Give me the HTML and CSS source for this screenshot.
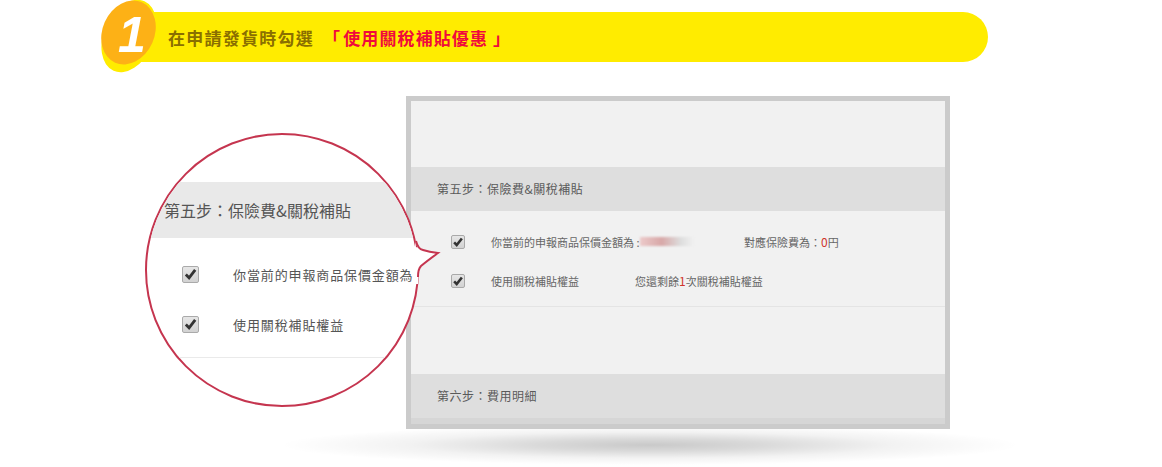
FILE: index.html
```
<!DOCTYPE html>
<html lang="zh-Hant">
<head>
<meta charset="utf-8">
<title>關稅補貼</title>
<link rel="stylesheet" href="styles.css">
</head>
<body>
<div class="canvas">
  <div class="banner">
    <span class="title-dark">在申請發貨時勾選</span>
    <span class="title-red">「&#8202;使用關稅補貼優惠 」</span>
  </div>
  <div class="badge">
    <svg width="70" height="76" viewBox="0 0 70 76">
      <ellipse cx="31" cy="36" rx="25" ry="38" fill="#ffec00" transform="rotate(24 31 36)"/>
      <ellipse cx="30.5" cy="32.5" rx="26" ry="33" fill="#fdb116" transform="rotate(24 30.5 32.5)"/>
    </svg>
    <span class="badge-num">1</span>
  </div>

  <div class="shadow"></div>

  <div class="panel">
    <div class="panel-gap-top"></div>
    <div class="band">第五步：保險費&amp;關稅補貼</div>
    <div class="rows">
      <div class="row">
        <span class="check"><svg viewBox="0 0 14 14" width="14" height="14"><path class="tick" d="M2.5 7.5 L5.5 10.5 L11.5 3"/></svg></span>
        <span class="col-a">你當前的申報商品保價金額為 :<span class="blur"></span></span>
        <span class="col-b">對應保險費為：<em>0</em>円</span>
      </div>
      <div class="row">
        <span class="check"><svg viewBox="0 0 14 14" width="14" height="14"><path class="tick" d="M2.5 7.5 L5.5 10.5 L11.5 3"/></svg></span>
        <span class="col-c">使用關稅補貼權益</span>
        <span class="col-d">您還剩餘<em>1</em>次關稅補貼權益</span>
      </div>
    </div>
    <div class="panel-gap-mid"></div>
    <div class="band">第六步：費用明細</div>
    <div class="panel-foot"></div>
  </div>

  <div class="lens">
    <div class="lens-band">第五步：保險費&amp;關稅補貼</div>
    <div class="lens-row lens-row-first">
      <span class="lens-check"><svg viewBox="0 0 16 16" width="16" height="16"><path class="tick" d="M3 8.5 L6.5 12 L13 3.5"/></svg></span>
      <span class="lens-text">你當前的申報商品保價金額為</span>
    </div>
    <div class="lens-row">
      <span class="lens-check"><svg viewBox="0 0 16 16" width="16" height="16"><path class="tick" d="M3 8.5 L6.5 12 L13 3.5"/></svg></span>
      <span class="lens-text">使用關稅補貼權益</span>
    </div>
    <div class="lens-rule"></div>
  </div>
  <svg class="tail" width="32" height="44" viewBox="0 0 32 44">
    <path class="tail-fill" d="M0 0 L1 7 Q12 12 23 13 L6 27 Q3 33 3 44 L0 44 Z"/>
    <path class="tail-line" d="M1 1 Q3 9 8 10 Q14 12 23 13 Q12 21 6 26 Q3 29 3 37"/>
  </svg>
</div>
</body>
</html>
```
FILE: styles.css
```
html, body {
  margin: 0;
  padding: 0;
  background: #fff;
}
.canvas {
  position: relative;
  width: 1162px;
  height: 467px;
  overflow: hidden;
  font-family: "Noto Sans CJK TC", "Noto Sans", sans-serif;
}
.banner {
  position: absolute;
  left: 130px;
  top: 12px;
  width: 858px;
  height: 50px;
  box-sizing: border-box;
  padding: 1px 0 0 38px;
  display: flex;
  align-items: center;
  gap: 9px;
  background: #ffec00;
  border-radius: 0 25px 25px 0;
  font-size: 17px;
  font-weight: 700;
  line-height: 48px;
  white-space: nowrap;
}
.title-dark { color: #8a6f00; letter-spacing: 1.25px; }
.title-red { color: #f00a3c; letter-spacing: 1.1px; }
.badge {
  position: absolute;
  left: 98px;
  top: 0;
  width: 70px;
  height: 76px;
}
.badge svg { display: block; }
.badge-num {
  position: absolute;
  left: 19px;
  top: 10px;
  width: 30px;
  text-align: center;
  font-family: "Liberation Sans", sans-serif;
  font-size: 50px;
  line-height: 50px;
  font-weight: 700;
  font-style: italic;
  color: #fff;
}
.shadow {
  position: absolute;
  left: 280px;
  top: 425px;
  width: 740px;
  height: 40px;
  background: radial-gradient(ellipse closest-side, rgba(0,0,0,.21) 0%, rgba(0,0,0,.15) 30%, rgba(0,0,0,.05) 65%, rgba(0,0,0,0) 100%);
}
.panel {
  position: absolute;
  left: 406px;
  top: 96px;
  width: 544px;
  height: 333px;
  box-sizing: border-box;
  border: 5px solid #cbcbcb;
  background: #f1f1f1;
  display: flex;
  flex-direction: column;
  color: #666;
  font-size: 11px;
}
.panel-gap-top { height: 66px; }
.band {
  height: 44px;
  flex: none;
  box-sizing: border-box;
  padding-left: 26px;
  background: #dedede;
  font-size: 12px;
  line-height: 44px;
  color: #5a5a5a;
  letter-spacing: 0.5px;
}
.rows {
  height: 96px;
  box-sizing: border-box;
  padding-top: 11px;
  border-bottom: 1px solid #e4e4e4;
}
.row {
  display: flex;
  align-items: center;
  height: 39px;
  white-space: nowrap;
  letter-spacing: 0;
}
.check {
  flex: none;
  width: 12px;
  height: 12px;
  margin-left: 40px;
  border: 1px solid #a9a9a9;
  border-radius: 2px;
  background: linear-gradient(#e6e6e6, #d2d2d2);
  display: flex;
  align-items: center;
  justify-content: center;
}
.tick {
  fill: none;
  stroke: #333;
  stroke-width: 3;
}
.col-a { margin-left: 26px; width: 253px; display: flex; align-items: center; }
.col-c { margin-left: 26px; width: 144px; }
.col-b em, .col-d em {
  font-style: normal;
  color: #d0342c;
  font-size: 12px;
}
.blur {
  display: inline-block;
  width: 54px;
  height: 9px;
  background: linear-gradient(90deg, #eccaca, #d8a8a8 40%, #ddd 75%, #f1f1f1);
  filter: blur(1px);
}
.panel-gap-mid { height: 67px; }
.panel-foot { flex: 1; background: #d6d6d6; }
.lens {
  position: absolute;
  left: 145px;
  top: 133px;
  width: 274px;
  height: 274px;
  box-sizing: border-box;
  border: 2px solid #c5354f;
  border-radius: 50%;
  background: #fff;
  overflow: hidden;
  color: #555;
}
.lens-band {
  margin-top: 47px;
  height: 56px;
  box-sizing: border-box;
  padding-left: 17px;
  background: #e9e9e9;
  font-size: 16px;
  line-height: 56px;
  color: #555;
  white-space: nowrap;
}
.lens-row {
  display: flex;
  align-items: center;
  height: 50px;
  white-space: nowrap;
  font-size: 13px;
  letter-spacing: 0.88px;
}
.lens-row-first { margin-top: 11px; }
.lens-check {
  flex: none;
  width: 15px;
  height: 15px;
  margin-left: 35px;
  border: 1px solid #aaa;
  border-radius: 2px;
  background: linear-gradient(#e6e6e6, #d2d2d2);
  display: flex;
  align-items: center;
  justify-content: center;
}
.lens-text { margin-left: 34px; }
.lens-rule {
  margin-top: 8px;
  border-top: 1px solid #eaeaea;
}
.tail {
  position: absolute;
  left: 415px;
  top: 240px;
}
.tail-fill { fill: #fff; }
.tail-line {
  fill: none;
  stroke: #c5354f;
  stroke-width: 2;
}
```
